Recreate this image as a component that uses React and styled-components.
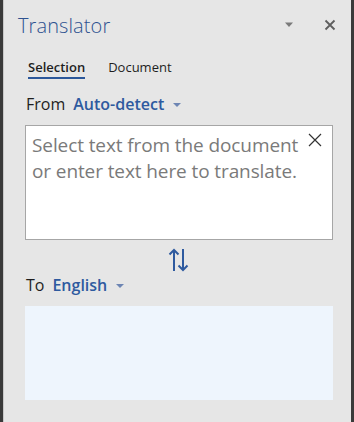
import React from "react";
import styled, { createGlobalStyle } from "styled-components";

const Global = createGlobalStyle`
  html, body { margin: 0; padding: 0; background: #e6e6e6; }
  body { font-family: "Open Sans", "Noto Sans", sans-serif; }
`;

const Pane = styled.div`
  width: 354px;
  height: 422px;
  box-sizing: border-box;
  background: #e6e6e6;
  border-left: 3px solid #3a3a3a;
  border-right: 3px solid #3a3a3a;
  box-shadow: inset 1px 0 0 #c8c8c8;
  padding: 0 18px 0 22px;
  display: flex;
  flex-direction: column;
  overflow: hidden;
`;

const Header = styled.div`
  display: flex;
  align-items: center;
  height: 48px;
  margin-left: -7px;
  margin-right: -7px;
  padding-top: 1px;
`;

const Title = styled.h1`
  flex: 1;
  margin: 0;
  font-size: 20px;
  font-weight: 300;
  color: #2e5290;
  letter-spacing: 0.1px;
`;

const HeaderButton = styled.button`
  border: 0;
  background: transparent;
  padding: 0;
  width: 20px;
  height: 20px;
  display: flex;
  align-items: center;
  justify-content: center;
  margin-left: ${(p) => p.$gap || 0}px;
`;

const Tabs = styled.div`
  display: flex;
  gap: 23px;
  margin-top: 9px;
  padding-left: 3px;
`;

const Tab = styled.div`
  font-size: 13px;
  font-weight: ${(p) => (p.$active ? 600 : 400)};
  color: #1e1e1e;
  padding-bottom: 1px;
  border-bottom: 2px solid ${(p) => (p.$active ? "#2b579a" : "transparent")};
`;

const LangRow = styled.div`
  display: flex;
  align-items: center;
  gap: 8px;
  font-size: 16px;
  margin-top: ${(p) => p.$top}px;
  margin-left: 1px;
  color: #1e1e1e;
`;

const LangPick = styled.span`
  display: flex;
  align-items: center;
  gap: 9px;
  color: #2e5a9f;
  font-weight: 600;
`;

const Caret = styled.span`
  width: 0;
  height: 0;
  border-left: 4px solid transparent;
  border-right: 4px solid transparent;
  border-top: 4px solid #6d85b3;
  margin-top: 2px;
`;

const InputBox = styled.div`
  position: relative;
  margin-top: 10px;
  height: 115px;
  width: 308px;
  box-sizing: border-box;
  background: #fff;
  border: 1px solid #a6a6a6;
  padding: 6px 28px 0 6px;
  font-size: 19px;
  line-height: 26px;
  color: #7a7a7a;
  letter-spacing: -0.1px;
`;

const Clear = styled.button`
  position: absolute;
  top: 7px;
  right: 10px;
  border: 0;
  background: transparent;
  padding: 0;
  display: flex;
`;

const Swap = styled.div`
  display: flex;
  justify-content: center;
  margin-top: 8px;
  height: 24px;
`;

const OutputBox = styled.div`
  margin-top: 10px;
  height: 94px;
  width: 308px;
  background: #eef5fd;
`;

export default function App() {
  return (
    <>
      <Global />
      <Pane>
        <Header>
          <Title>Translator</Title>
          <HeaderButton>
            <svg width="10" height="6" viewBox="0 0 10 6"><path d="M1 0.5h8L5 5z" fill="#7a7a7a" /></svg>
          </HeaderButton>
          <HeaderButton $gap={21}>
            <svg width="12" height="12" viewBox="0 0 12 12"><path d="M1.5 1.5l9 9M10.5 1.5l-9 9" stroke="#5e5e5e" strokeWidth="1.8" /></svg>
          </HeaderButton>
        </Header>
        <Tabs>
          <Tab $active>Selection</Tab>
          <Tab>Document</Tab>
        </Tabs>
        <LangRow $top={14}>
          From
          <LangPick>
            Auto-detect <Caret />
          </LangPick>
        </LangRow>
        <InputBox>
          Select text from the document or enter text here to translate.
          <Clear>
            <svg width="14" height="14" viewBox="0 0 14 14"><path d="M1 1l12 12M13 1L1 13" stroke="#333" strokeWidth="1.2" /></svg>
          </Clear>
        </InputBox>
        <Swap>
          <svg width="22" height="24" viewBox="0 0 22 24">
            <path d="M6 23V2M1.5 6.5L6 2l4.5 4.5" stroke="#2e5a9f" strokeWidth="2" fill="none" />
            <path d="M15 1v21M10.5 17.5L15 22l4.5-4.5" stroke="#2e5a9f" strokeWidth="2" fill="none" />
          </svg>
        </Swap>
        <LangRow $top={2}>
          To
          <LangPick>
            English <Caret />
          </LangPick>
        </LangRow>
        <OutputBox />
      </Pane>
    </>
  );
}
